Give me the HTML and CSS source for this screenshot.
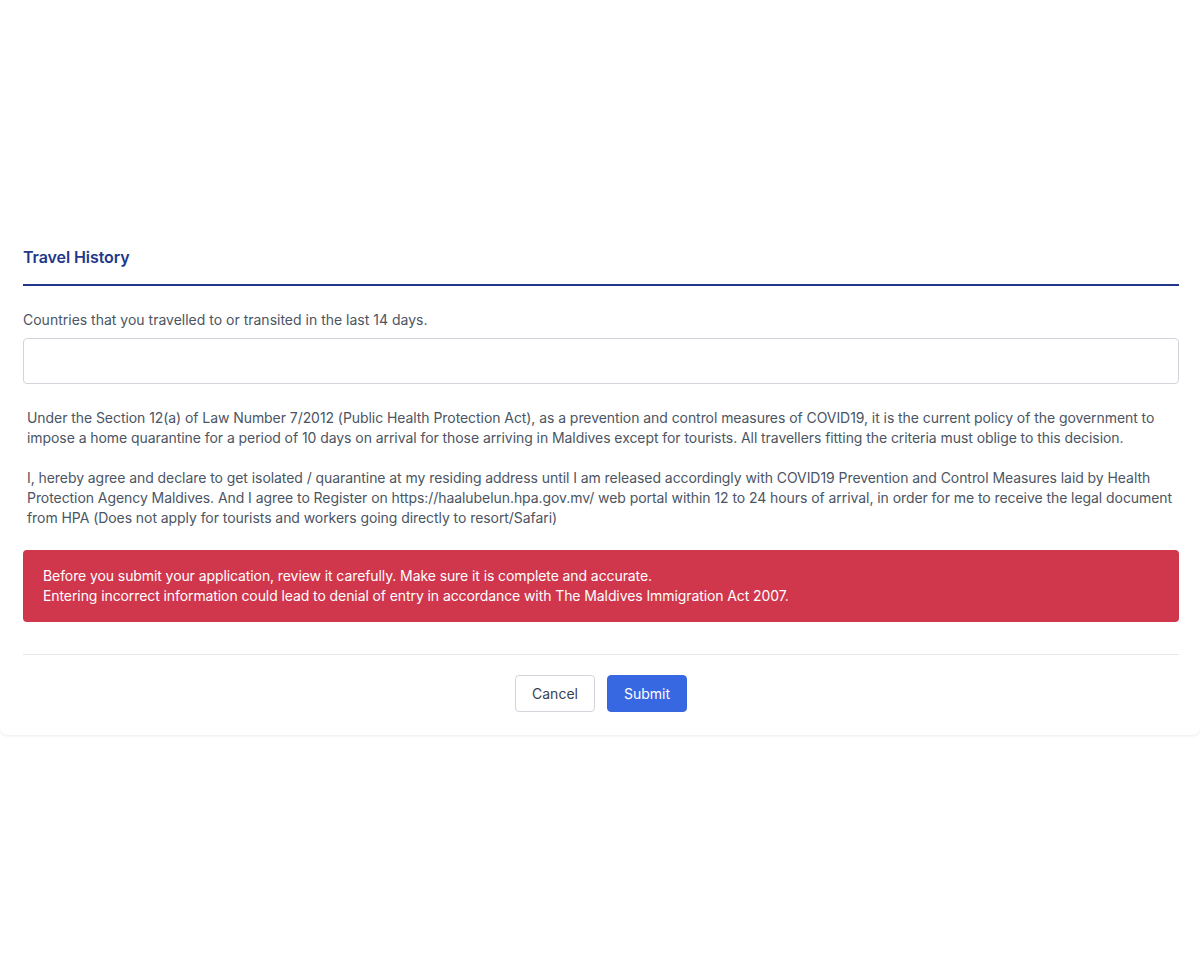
FILE: index.html
```html
<!DOCTYPE html>
<html lang="en">
<head>
<meta charset="utf-8">
<title>Travel History</title>
<link rel="stylesheet" href="styles.css">
</head>
<body>
<div class="card">
  <h2 class="section-title">Travel History</h2>
  <label class="field-label" for="countries">Countries that you travelled to or transited in the last 14 days.</label>
  <input class="field-input" id="countries" type="text">
  <div class="declaration">
    <p>Under the Section 12(a) of Law Number 7/2012 (Public Health Protection Act), as a prevention and control measures of COVID19, it is the current policy of the government to impose a home quarantine for a period of 10 days on arrival for those arriving in Maldives except for tourists. All travellers fitting the criteria must oblige to this decision.</p>
    <p>I, hereby agree and declare to get isolated / quarantine at my residing address until I am released accordingly with COVID19 Prevention and Control Measures laid by Health Protection Agency Maldives. And I agree to Register on https://haalubelun.hpa.gov.mv/ web portal within 12 to 24 hours of arrival, in order for me to receive the legal document from HPA (Does not apply for tourists and workers going directly to resort/Safari)</p>
  </div>
  <div class="alert">
    Before you submit your application, review it carefully. Make sure it is complete and accurate.<br>
    Entering incorrect information could lead to denial of entry in accordance with The Maldives Immigration Act 2007.
  </div>
  <div class="actions">
    <button class="btn btn-cancel" type="button">Cancel</button>
    <button class="btn btn-submit" type="button">Submit</button>
  </div>
</div>
</body>
</html>
```

FILE: styles.css
```css
* { box-sizing: border-box; }
html, body { margin: 0; padding: 0; background: #ffffff; }
body {
  font-family: Inter, "Noto Sans", "Liberation Sans", sans-serif;
  color: #4b5563;
  width: 1200px;
  height: 966px;
}
.card {
  background: #fff;
  padding: 245px 21px 23px 23px;
  border-radius: 0 0 8px 8px;
  box-shadow: 0 1px 3px rgba(0,0,0,0.08);
}
.section-title {
  margin: 0;
  font-size: 16px;
  line-height: 24px;
  font-weight: 600;
  color: #23378a;
  padding-bottom: 15px;
  border-bottom: 2px solid #23378a;
  letter-spacing: -0.08px;
}
.field-label {
  display: block;
  margin-top: 24px;
  font-size: 14px;
  line-height: 20px;
  color: #4b5563;
}
.field-input {
  display: block;
  width: 100%;
  height: 46px;
  margin-top: 8px;
  border: 1px solid #d1d5db;
  border-radius: 4px;
  background: #fff;
  font: inherit;
}
.declaration {
  margin-top: 24px;
  padding: 0 4px;
  font-size: 14px;
  line-height: 20px;
  color: #4b5563;
  letter-spacing: -0.065px;
}
.declaration p { margin: 0 0 20px 0; }
.declaration p:last-child { margin-bottom: 0; }
.alert {
  margin-top: 22px;
  background: #d0364c;
  color: #fff;
  border-radius: 4px;
  padding: 16px 20px;
  font-size: 14px;
  line-height: 20px;
  letter-spacing: -0.09px;
}
.actions {
  margin-top: 32px;
  border-top: 1px solid #e5e7eb;
  padding-top: 20px;
  display: flex;
  justify-content: center;
  gap: 12px;
}
.btn {
  width: 80px;
  height: 37px;
  border-radius: 4px;
  font-family: inherit;
  font-size: 14px;
  font-weight: 400;
  cursor: pointer;
}
.btn-cancel {
  background: #fff;
  border: 1px solid #d1d5db;
  color: #374151;
}
.btn-submit {
  background: #3867e2;
  border: 1px solid #3867e2;
  color: #fff;
}
```
